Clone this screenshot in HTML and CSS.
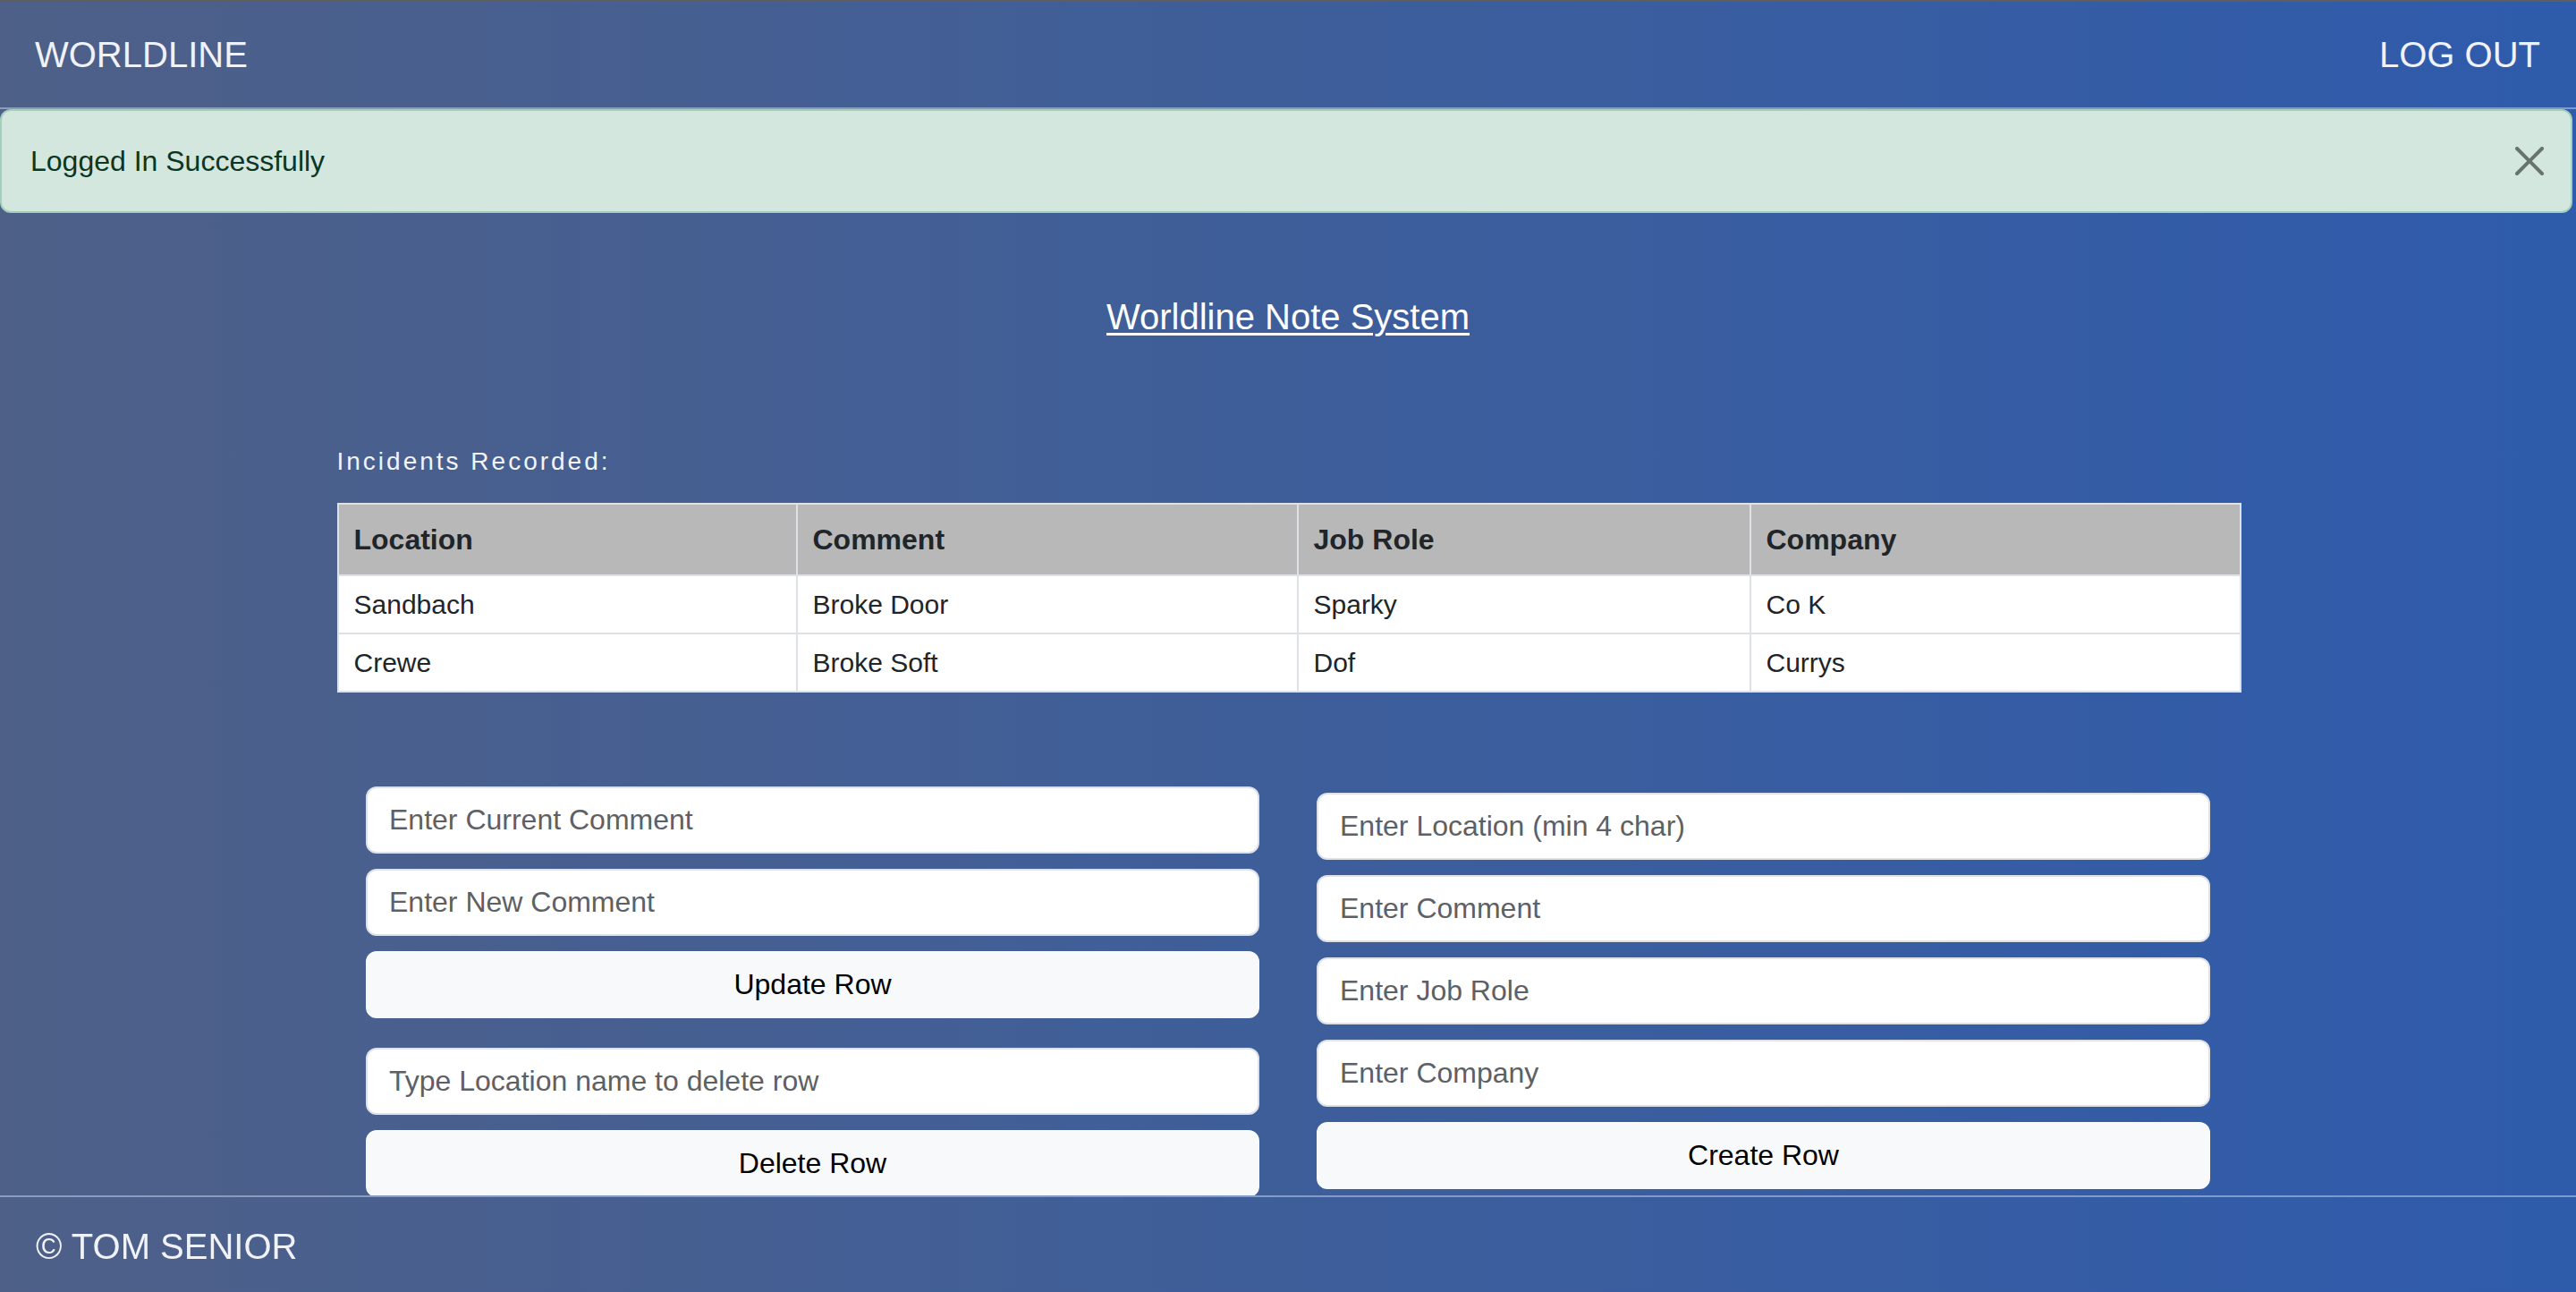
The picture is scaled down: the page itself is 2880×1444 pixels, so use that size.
FILE: index.html
```html
<!DOCTYPE html>
<html lang="en">
<head>
<meta charset="utf-8">
<title>Worldline Note System</title>
<link rel="stylesheet" href="styles.css">
</head>
<body>
<header class="topbar">
  <a class="brand" href="#">WORLDLINE</a>
  <a class="logout" href="#">LOG OUT</a>
</header>

<div class="alert" role="alert">
  Logged In Successfully
  <button class="btn-close" type="button" aria-label="Close">
    <svg viewBox="0 0 16 16" width="32" height="32"><path d="M.293.293a1 1 0 0 1 1.414 0L8 6.586 14.293.293a1 1 0 1 1 1.414 1.414L9.414 8l6.293 6.293a1 1 0 0 1-1.414 1.414L8 9.414l-6.293 6.293a1 1 0 0 1-1.414-1.414L6.586 8 .293 1.707a1 1 0 0 1 0-1.414z"/></svg>
  </button>
</div>

<main class="content">
  <h1 class="title"><a href="#">Worldline Note System</a></h1>

  <section class="records">
    <p class="records-label">Incidents Recorded:</p>
    <table class="incidents">
      <colgroup>
        <col class="c1"><col class="c2"><col class="c3"><col class="c4">
      </colgroup>
      <thead>
        <tr><th>Location</th><th>Comment</th><th>Job Role</th><th>Company</th></tr>
      </thead>
      <tbody>
        <tr><td>Sandbach</td><td>Broke Door</td><td>Sparky</td><td>Co K</td></tr>
        <tr><td>Crewe</td><td>Broke Soft</td><td>Dof</td><td>Currys</td></tr>
      </tbody>
    </table>
  </section>

  <section class="forms">
    <div class="form-col left">
      <input class="field" type="text" placeholder="Enter Current Comment">
      <input class="field" type="text" placeholder="Enter New Comment">
      <button class="btn" type="button">Update Row</button>
      <input class="field spaced" type="text" placeholder="Type Location name to delete row">
      <button class="btn" type="button">Delete Row</button>
    </div>
    <div class="form-col right">
      <input class="field" type="text" placeholder="Enter Location (min 4 char)">
      <input class="field" type="text" placeholder="Enter Comment">
      <input class="field" type="text" placeholder="Enter Job Role">
      <input class="field" type="text" placeholder="Enter Company">
      <button class="btn" type="button">Create Row</button>
    </div>
  </section>
</main>

<footer class="footer">
  <span>&copy; TOM SENIOR</span>
</footer>
</body>
</html>
```

FILE: styles.css
```css
* { box-sizing: border-box; }

html, body { height: 100%; }

body {
  margin: 0;
  border-top: 2px solid #5e5e60;
  font-family: "Liberation Sans", Arial, Helvetica, sans-serif;
  background: linear-gradient(to right, #4e6088 0%, #3e5e9a 50%, #2f5bac 100%);
  background-attachment: fixed;
  color: #212529;
  overflow: hidden;
}

.topbar {
  height: 120px;
  display: flex;
  align-items: center;
  justify-content: space-between;
  padding: 0 40px 0 39px;
  border-bottom: 2px solid rgba(190, 205, 235, 0.55);
}

.brand, .logout {
  color: #f0f2f8;
  text-decoration: none;
  font-size: 40px;
  line-height: 48px;
}

.alert {
  position: relative;
  margin: 0 4px 0 0;
  padding: 32px 96px 32px 32px;
  background: #d3e7de;
  border: 2px solid #a3cfbb;
  border-radius: 12px;
  color: #0a3622;
  font-size: 32px;
  line-height: 48px;
}

.btn-close {
  position: absolute;
  top: 50%;
  right: 30px;
  transform: translateY(-50%);
  width: 32px;
  height: 32px;
  padding: 0;
  border: 0;
  background: transparent;
  opacity: 0.5;
  display: flex;
}

.btn-close svg { fill: #000; }

.content {
  display: flex;
  flex-direction: column;
  align-items: center;
}

.title {
  margin: 92px 0 0;
  font-size: 40px;
  line-height: 48px;
  font-weight: normal;
}

.title a {
  color: #ffffff;
  text-decoration: underline;
  text-decoration-thickness: 3px;
  text-underline-offset: 4px;
}

.records {
  width: 2127px;
  margin-top: 121px;
}

.records-label {
  margin: 0 0 29px;
  color: #f2f4f8;
  font-size: 28px;
  line-height: 34px;
  letter-spacing: 3px;
}

.incidents {
  width: 2127px;
  table-layout: fixed;
  border-collapse: collapse;
  border: 2px solid #dee2e6;
  background: #ffffff;
}

.c1 { width: 513px; }
.c2 { width: 560px; }
.c3 { width: 506px; }
.c4 { width: 548px; }

.incidents th,
.incidents td {
  border: 2px solid #dee2e6;
  text-align: left;
  color: #212529;
}

.incidents th {
  background: #b8b8b8;
  font-size: 32px;
  font-weight: bold;
  line-height: 48px;
  padding: 15px 16px 15px 17px;
}

.incidents td {
  font-size: 30px;
  line-height: 36px;
  height: 65px;
  padding: 0 16px 0 17px;
}

.forms {
  display: flex;
  gap: 64px;
  margin-top: 105px;
}

.form-col {
  width: 999px;
  display: flex;
  flex-direction: column;
  gap: 17px;
}

.form-col.right { margin-top: 7px; }

.field {
  height: 75px;
  width: 100%;
  padding: 0 24px;
  border: 2px solid #dee2e6;
  border-radius: 12px;
  background: #ffffff;
  font-family: "Liberation Sans", Arial, Helvetica, sans-serif;
  font-size: 32px;
  color: #212529;
  outline: none;
}

.field::placeholder { color: #5d6064; opacity: 1; }

.field.spaced { margin-top: 16px; }

.btn {
  height: 75px;
  width: 100%;
  border: 2px solid #f8f9fa;
  border-radius: 12px;
  background: #f8f9fa;
  font-family: "Liberation Sans", Arial, Helvetica, sans-serif;
  font-size: 32px;
  color: #000000;
  cursor: pointer;
}

.footer {
  position: fixed;
  left: 0;
  right: 0;
  bottom: 0;
  height: 108px;
  display: flex;
  align-items: center;
  padding: 4px 0 0 40px;
  border-top: 2px solid rgba(190, 205, 235, 0.55);
  background: linear-gradient(to right, #4e6088 0%, #3e5e9a 50%, #2f5bac 100%);
  color: #f0f2f8;
  font-size: 40px;
  line-height: 48px;
}
```
